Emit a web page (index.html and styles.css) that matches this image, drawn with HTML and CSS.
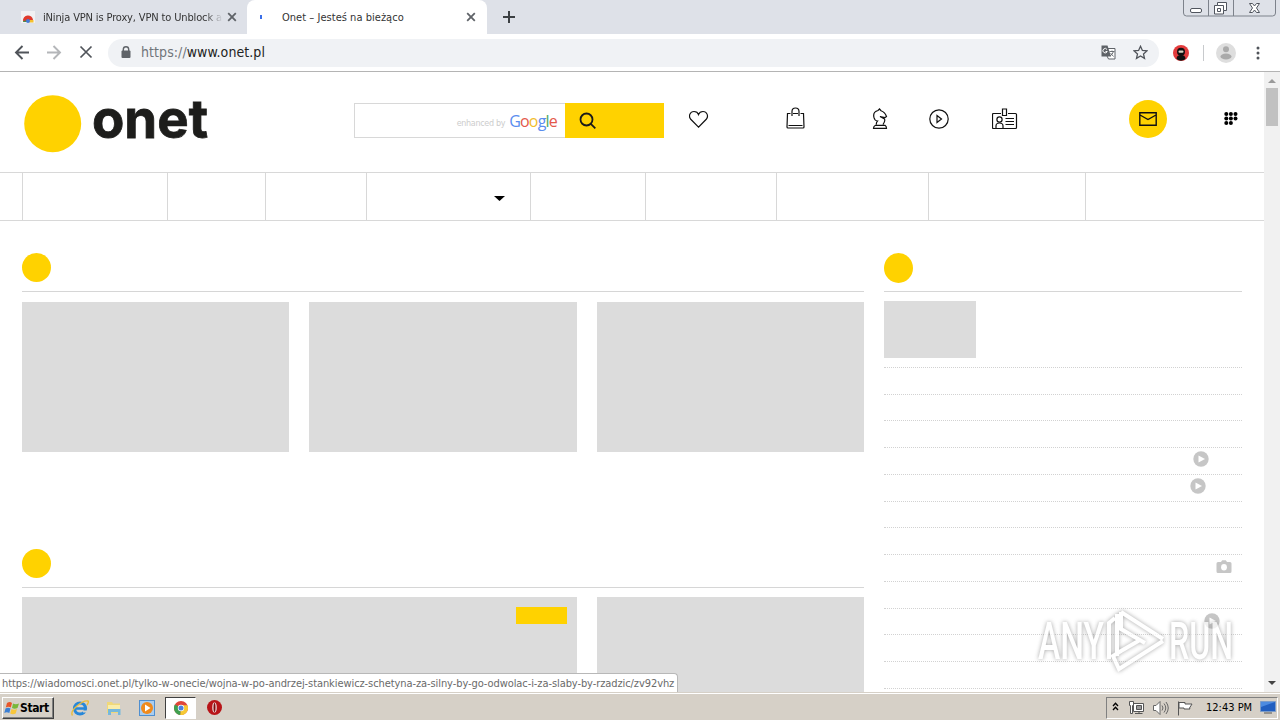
FILE: index.html
```html
<!DOCTYPE html>
<html lang="pl">
<head>
<meta charset="utf-8">
<title>Onet – Jesteś na bieżąco</title>
<link rel="stylesheet" href="styles.css">
</head>

<body>
<div class="screen">

	<!-- tabs -->
	<div class="tabs">
		<div class="tab">
			<svg class="favicon" width="16" height="16" viewBox="0 0 16 16">
				<path d="M1 2h14v12H1z" fill="#f1f1f3"/>
				<path d="M3 13a5 5 0 0 1 10 0z" fill="#4c8a4a"/>
				<path d="M3 12a5 5 0 0 1 10-1l-5 0z" fill="#e0392b"/>
				<path d="M9 11h4.500v2.500H9z" fill="#f5c02d"/>
				<circle cx="8" cy="12" r="2" fill="#4478d8"/>
			</svg>
			<span class="tabtitle fade">iNinja VPN is Proxy, VPN to Unblock a</span>
			<svg class="close" width="10" height="10" viewBox="0 0 10 10"><path d="M1.200 1.200l7.600 7.600M8.800 1.200l-7.600 7.600"/></svg>
		</div>
		<div class="tab active">
			<span class="spinner"></span>
			<span class="tabtitle">Onet – Jesteś na bieżąco</span>
			<svg class="close" width="10" height="10" viewBox="0 0 10 10"><path d="M1.200 1.200l7.600 7.600M8.800 1.200l-7.600 7.600"/></svg>
		</div>
		<svg class="newtab" width="12" height="12" viewBox="0 0 12 12"><path d="M6 0v12M0 6h12"/></svg>
		<svg class="winbtns" width="94" height="17" viewBox="0 0 94 17">
			<path d="M.5 0v13q0 3 3 3h86q3 0 3-3V0M25.500 0v16M50.500 0v16" fill="none" stroke="#7d828b"/>
			<rect x="7.500" y="8.500" width="11" height="4" rx="1.500" fill="#fff" stroke="#50555e"/>
			<path d="M34.500 2.500h9v8h-3v3.500h-9V5.500h3z" fill="#fff" stroke="#50555e"/>
			<path d="M34.500 5.500h6v5M34.500 8.500h3v3h-3z" fill="none" stroke="#50555e"/>
			<path d="M66.500 3.500h3l2 2.500 2-2.500h3L73.500 8l3 4.500h-3l-2-2.500-2 2.500h-3l3-4.500z" fill="#fff" stroke="#50555e"/>
		</svg>
	</div>

	<!-- toolbar -->
	<div class="toolbar">
		<svg class="navbtns" width="92" height="20" viewBox="0 0 92 20" fill="none" stroke-width="1.900">
			<path d="M15 9.500H2.500M8.500 3L2 9.500 8.500 16" stroke="#50545a"/>
			<path d="M33 9.500h12.500M39.500 3L46 9.500 39.500 16" stroke="#b4b6b9"/>
			<path d="M66.500 3.500l11 11M77.500 3.500l-11 11" stroke="#50545a" stroke-width="1.700"/>
		</svg>
		<div class="address">
			<svg width="10" height="13" viewBox="0 0 10 13">
				<path d="M2.300 5V3.400a2.700 2.700 0 0 1 5.400 0V5" fill="none" stroke="#5f6368" stroke-width="1.400"/>
				<rect x=".5" y="4.500" width="9" height="7.500" rx="1" fill="#5f6368"/>
			</svg>
			<span class="url"><i>https://</i>www.onet.pl</span>
			<svg class="translate" width="15" height="15" viewBox="0 0 15 15">
				<path d="M6 3.500h8v10.500H7.500L6 11" fill="#fff" stroke="#5f6368"/>
				<path d="M.5.500h6L10 11.500H.500z" fill="#5f6368"/>
				<path d="M6 4.500a2.200 2.200 0 1 0 .2 2H4.500" fill="none" stroke="#fff"/>
				<path d="M8.500 6.500h5M11 5.500v1M12.500 6.500q-1 3-3.500 4.500M9.500 8l3 3.500" fill="none" stroke="#5f6368" stroke-width=".9"/>
			</svg>
			<svg class="star" width="15" height="15" viewBox="0 0 15 15"><path d="M7.500 1.300l1.900 4.200 4.500.4-3.400 3 1 4.500-4-2.400-4 2.400 1-4.500-3.400-3 4.500-.4z" fill="none" stroke="#50545a" stroke-width="1.300"/></svg>
		</div>
		<svg class="ext" width="16" height="16" viewBox="0 0 16 16">
			<circle cx="8" cy="8" r="8" fill="#e33b3c"/>
			<circle cx="8" cy="6.800" r="4" fill="#111"/>
			<path d="M3.500 14q0-4 4.500-4t4.500 4Q8 17.500 3.500 14z" fill="#111"/>
			<rect x="5.500" y="5.500" width="5" height="2.200" rx="1" fill="#d9d4c4"/>
		</svg>
		<span class="split"></span>
		<svg class="avatar" width="20" height="20" viewBox="0 0 20 20">
			<circle cx="10" cy="10" r="10" fill="#dedede"/>
			<circle cx="10" cy="6.300" r="3" fill="#aaa"/>
			<ellipse cx="10" cy="13.500" rx="5.500" ry="3" fill="#aaa"/>
		</svg>
		<svg width="4" height="14" viewBox="0 0 4 14" fill="#50545a"><circle cx="2" cy="2" r="1.500"/><circle cx="2" cy="7" r="1.500"/><circle cx="2" cy="12" r="1.500"/></svg>
	</div>

	<div class="viewport">
		<div class="page">

			<!-- header -->
			<div class="header">
				<svg class="circle" width="58" height="58" viewBox="0 0 58 58"><circle cx="28.700" cy="28.700" r="28.500" fill="#ffd200"/></svg>
				<svg class="logo" width="122" height="80" viewBox="0 0 122 80">
					<text x="3" y="54" textLength="116" lengthAdjust="spacingAndGlyphs">onet</text>
				</svg>
				<div class="search">
					<div class="field">
						<span class="enhanced">enhanced by</span>
						<span class="google"><b class="b">G</b><b class="r">o</b><b class="y">o</b><b class="b">g</b><b class="g">l</b><b class="r">e</b></span>
					</div>
					<div class="go">
						<svg width="18" height="18" viewBox="0 0 18 18" fill="none" stroke="#1a1a1a" stroke-width="1.800"><circle cx="7.500" cy="7.500" r="6"/><path d="M11.800 11.800l4.500 4.500"/></svg>
					</div>
				</div>
				<div class="icons">
					<svg class="heart" width="20" height="18" viewBox="0 0 20 18"><path d="M9.500 17.200L1.500 9C-.7 6 1 1.500 5 1.500 7.500 1.500 9 3 9.500 4.500c.6-1.500 2-3 4.500-3 4 0 5.700 4.500 3.500 7.500z"/></svg>
					<svg class="bag" width="19" height="22" viewBox="0 0 19 22"><path d="M4.500 6.500h-3L1 20q0 1 1 1h15q1 0 1-1L17.500 6.500h-3M7 6.500h5M6 9V4.500a3.500 3.500 0 0 1 7 0V9M2.500 18.500h14"/></svg>
					<svg class="horse" width="16" height="22" viewBox="0 0 16 22"><path d="M2 9.500Q.5 4 6 2.500L7.500 1 9 2.700Q13 4 14.500 8.500L13 9.500 8 8.500l4.500 2.500q1 2-1.500 5.500M2 9.500q.5 3 3.500 3.500-1.500 1.500-1 3.500M3.500 17.300h9.500q1.500 1 1.500 3H1.500q0-2 2-3z"/></svg>
					<svg class="play" width="20" height="20" viewBox="0 0 20 20"><circle cx="10" cy="10" r="9.200"/><path d="M8 6.500v7L12.500 10z"/></svg>
					<svg class="card" width="26" height="22" viewBox="0 0 26 22"><path d="M9 5.500H1.500q-1 0-1 1v13q0 1 1 1h22q1 0 1-1v-13q0-1-1-1H16M10.500 1h4v6.500h-4zM13.500 10.500h8.500M13.500 13.500h8.500M13.500 16.500h8.500M4 20v-2q0-3 3.500-3t3.500 3v2"/><circle cx="7.500" cy="11.500" r="2.600"/></svg>
				</div>
				<div class="mail">
					<svg width="18" height="14" viewBox="0 0 18 14" fill="none" stroke="#111" stroke-width="1.400"><path d="M.8.800h16.400v12.400H.8zM1 3l8 4.500L17 3"/></svg>
				</div>
				<svg class="dots" width="14" height="13" viewBox="0 0 14 13" fill="#000">
					<circle cx="2.300" cy="2" r="2"/><circle cx="6.900" cy="2" r="2"/><circle cx="11.500" cy="2" r="2"/>
					<circle cx="2.300" cy="6.500" r="2"/><circle cx="6.900" cy="6.500" r="2"/><circle cx="11.500" cy="6.500" r="2"/>
					<circle cx="2.300" cy="11" r="2"/><circle cx="6.900" cy="11" r="2"/>
				</svg>
			</div>

			<!-- menu -->
			<div class="menu">
				<span></span><span></span><span></span>
				<span><svg width="11" height="5" viewBox="0 0 11 5"><path d="M0 0h11L5.500 5z"/></svg></span>
				<span></span><span></span><span></span><span></span><span></span>
			</div>

			<!-- content -->
			<div class="content">
				<div class="main">
					<div class="head"><span class="dot"></span></div>
					<div class="thumbs">
						<div></div>
						<div></div>
						<div></div>
					</div>
					<div class="head second"><span class="dot"></span></div>
					<div class="thumbs">
						<div class="wide"><span class="label"></span></div>
						<div></div>
					</div>
				</div>
				<div class="side">
					<div class="head"><span class="dot"></span></div>
					<div class="lead"><div class="pic"></div></div>
					<ul class="news">
						<li></li>
						<li></li>
						<li></li>
						<li><svg class="n1" width="16" height="16" viewBox="0 0 16 16"><circle cx="8" cy="8" r="7.700"/><path d="M5.500 4.500v7L12 8z" fill="#fff"/></svg></li>
						<li><svg class="n2" width="16" height="16" viewBox="0 0 16 16"><circle cx="8" cy="8" r="7.700"/><path d="M5.500 4.500v7L12 8z" fill="#fff"/></svg></li>
						<li></li>
						<li></li>
						<li><svg class="n3" width="16" height="14" viewBox="0 0 16 14"><path d="M5 2l1.200-1.700h3.600L11 2h3q1.500 0 1.500 1.500v8q0 1.500-1.500 1.500H2Q.5 13 .5 11.500v-8Q.5 2 2 2z"/><ellipse cx="8" cy="7.300" rx="2.900" ry="3.300" fill="#fff"/></svg></li>
						<li></li>
						<li><svg class="n4" width="16" height="16" viewBox="0 0 16 16"><circle cx="8" cy="8" r="7.700"/><path d="M5.500 4.500v7L12 8z" fill="#fff"/></svg></li>
						<li></li>
						<li></li>
					</ul>
				</div>
			</div>
		</div>

		<div class="scroll">
			<svg width="8" height="4" viewBox="0 0 8 4"><path d="M0 4l4-4 4 4z" fill="#9a9a9a"/></svg>
			<div class="thumb"></div>
			<svg class="down" width="8" height="4" viewBox="0 0 8 4"><path d="M0 0h8L4 4z" fill="#444"/></svg>
		</div>

		<svg class="watermark" width="204" height="70" viewBox="0 0 204 70">
			<text x="2" y="51" textLength="66" lengthAdjust="spacingAndGlyphs">ANY</text>
			<text x="133" y="51" textLength="64" lengthAdjust="spacingAndGlyphs">RUN</text>
			<path d="M73 51V15l6-5M81 48V6M85 4l42 27M85 4v17l24 14M85 43l19-11M85 43l-8 5 6 13 44-28"/>
		</svg>
		<div class="status">https://wiadomosci.onet.pl/tylko-w-onecie/wojna-w-po-andrzej-stankiewicz-schetyna-za-silny-by-go-odwolac-i-za-slaby-by-rzadzic/zv92vhz</div>
	</div>

	<!-- taskbar -->
	<div class="taskbar">
		<div class="start">
			<svg width="16" height="16" viewBox="0 0 16 16">
				<path d="M3 3q3-2 5 0L6.800 7.500q-2.500-1.500-5 0z" fill="#e8562a"/>
				<path d="M9 3.500q2.500 1.500 6 0L13.500 8q-3 1.500-5.500 0z" fill="#78b83a"/>
				<path d="M1.500 8.500q2.500-1.500 5 0L5.300 13q-2.500-1.500-5 0z" fill="#3b7fd4"/>
				<path d="M7.500 9q2.500 1.500 5.500 0l-1.300 4.500q-3 1.500-5.500 0z" fill="#f8c63a"/>
			</svg>
			<b>Start</b>
		</div>
		<svg class="ie" width="18" height="18" viewBox="0 0 18 18">
			<circle cx="9" cy="9.500" r="5.500" fill="none" stroke="#2687d9" stroke-width="3.200"/>
			<path d="M5 9.500h9.500" stroke="#2687d9" stroke-width="2.500"/>
			<path d="M12 11.500h5v2h-5z" fill="#d4d0c8"/>
			<path d="M1.500 16.500Q-1 13 6 7T17 2q1 1-1 4" fill="none" stroke="#e9bc3c" stroke-width="1.400"/>
		</svg>
		<svg class="explorer" width="16" height="16" viewBox="0 0 16 16">
			<path d="M1 2h5l1 1.500h7V13H1z" fill="#f0d878"/>
			<path d="M2 5h12v6H2z" fill="#f9edaa"/>
			<path d="M2 9h12.500v6H12v-3H5v3H2z" fill="#76b8dc"/>
		</svg>
		<svg class="wmp" width="16" height="16" viewBox="0 0 16 16">
			<rect x=".5" y=".5" width="15" height="15" fill="#a9cdf0" stroke="#4f8fd0"/>
			<circle cx="8" cy="8" r="6" fill="#f08a1c"/>
			<path d="M6 4.500v7L11.500 8z" fill="#fff"/>
		</svg>
		<div class="running">
			<svg width="14" height="14" viewBox="0 0 14 14">
				<circle cx="7" cy="7" r="7" fill="#e0463a"/>
				<path d="M7 7L.9 3.500A7 7 0 0 0 6.500 14z" fill="#3fa050"/>
				<path d="M7 7h0l-.7 7A7 7 0 0 0 13.400 4.200H7z" fill="#f6c934"/>
				<circle cx="7" cy="7" r="3.200" fill="#fff"/><circle cx="7" cy="7" r="2.500" fill="#4b80e0"/>
			</svg>
		</div>
		<svg class="opera" width="15" height="15" viewBox="0 0 15 15"><circle cx="7.500" cy="7.500" r="7.500" fill="#b81418"/><ellipse cx="7.500" cy="7.500" rx="2.200" ry="5" fill="#f2e4e4"/><ellipse cx="7.500" cy="7.500" rx="1" ry="4.500" fill="#7d0b0d"/></svg>
		<div class="tray">
			<svg class="chev" width="7" height="9" viewBox="0 0 7 9" fill="none" stroke="#000" stroke-width="1.300"><path d="M1 4l2.500-2.800L6 4M1 8l2.500-2.800L6 8"/></svg>
			<svg class="net" width="16" height="16" viewBox="0 0 16 16" fill="#fff" stroke="#555"><path d="M4.500 3.500h10v8h-10zM6 13.500h7.500M10 11.500v2"/><path d="M7.500 5.500h5v4h-5z" fill="#999"/><path d="M.5 1.500h4v4h-1v8h-2v-8h-1z"/></svg>
			<svg class="vol" width="16" height="16" viewBox="0 0 16 16" fill="none" stroke="#666"><path d="M.5 5.500H3l4-4v13l-4-4H.5z" fill="#fff"/><path d="M9 5.500q2 2.500 0 5M11 3.500q3.500 4.500 0 9M13 2q4.500 6 0 12"/></svg>
			<svg class="flag" width="16" height="16" viewBox="0 0 16 16" fill="#fff" stroke="#555"><path d="M1.500 1.500v14M2 2.500h6v1.500h7l-2.500 4 .5 1H7V8H2z"/></svg>
			<span class="clock">12:43 PM</span>
			<svg class="desk" width="16" height="13" viewBox="0 0 16 13"><path d="M.5.500h15v10H.5z" fill="#225fc0" stroke="#7c9cc8"/><path d="M1 1h14L1 6z" fill="#4d8be0"/><path d="M4 12h8" stroke="#555"/></svg>
		</div>
	</div>

</div>
</body>
</html>
```
FILE: styles.css
```css
* {
	box-sizing: border-box;
}

body {
	margin: 0;
	font: 11px "DejaVu Sans Condensed", "DejaVu Sans", sans-serif;
	font-stretch: condensed;
	color: #333;
}

svg, span {
	flex: none;
}

.screen {
	width: 1280px;
	height: 720px;
	display: flex;
	flex-direction: column;
	overflow: hidden;
	background: #fff;
}

/* tabs */
.tabs {
	height: 34px;
	display: flex;
	background: #dee1e8;
}

.tab {
	width: 247px;
	display: flex;
	align-items: center;
	padding: 0 10px 0 20px;
}

.tab.active {
	width: 240px;
	padding: 0 11px 0 13px;
	background: #fff;
	border-radius: 8px 8px 0 0;
}

.tabtitle {
	flex: 1;
	margin-left: 7px;
	white-space: nowrap;
	letter-spacing: -0.14px;
}

.active .tabtitle {
	margin-left: 20px;
	letter-spacing: 0.03px;
}

.fade {
	margin-right: 4px;
	-webkit-mask-image: linear-gradient(90deg, #000 90%, transparent);
}

.close {
	fill: none;
	stroke: #5f6368;
	stroke-width: 1.8;
}

.spinner {
	width: 2px;
	height: 4px;
	background: #3b6fe8;
}

.newtab {
	margin: 11px 0 0 16px;
	stroke: #3c4043;
	stroke-width: 2;
}

.winbtns {
	margin: 0 3px 0 auto;
}

/* toolbar */
.toolbar {
	height: 38px;
	display: flex;
	align-items: center;
	padding: 0 20px 0 14px;
	border-bottom: 1px solid #b4b4b4;
}

.address {
	width: 1051px;
	height: 28px;
	margin: 0 14px 0 2px;
	padding: 0 11px 0 13px;
	display: flex;
	align-items: center;
	background: #f0f2f5;
	border-radius: 14px;
}

.url {
	margin: -2px 0 0 10px;
	font-size: 14px;
	letter-spacing: 0.07px;
	color: #222;
}

.url i {
	font-style: normal;
	color: #70757a;
}

.translate {
	margin: 0 17px 0 auto;
}

.split {
	width: 1px;
	height: 16px;
	margin: 0 12px 0 14px;
	background: #c8cacd;
}

.avatar {
	margin-right: 20px;
}

/* page */
.viewport {
	height: 620px;
	display: flex;
	position: relative;
}

.page {
	width: 1264px;
	overflow: hidden;
}

.header {
	height: 100px;
	display: flex;
	align-items: flex-start;
	padding-left: 24px;
}

.circle {
	margin-top: 23px;
}

.logo {
	margin: 12px 0 0 7px;
}

.logo text {
	font: 700 54px Inter, sans-serif;
	fill: #1d1d1b;
	stroke: #1d1d1b;
	stroke-width: 0.8;
}

.search {
	width: 310px;
	height: 35px;
	margin: 31px 0 0 143px;
	display: flex;
}

.field {
	flex: 1;
	display: flex;
	justify-content: flex-end;
	align-items: center;
	padding-right: 8px;
	border: 1px solid #d8d8d8;
	border-right: 0;
}

.enhanced {
	margin: 5px 4px 0 0;
	font: 8px "DejaVu Sans", sans-serif;
	letter-spacing: -0.3px;
	color: #ccc;
}

.google {
	font: 16px "Open Sans", sans-serif;
	letter-spacing: -0.8px;
}

.google b {
	font-weight: 500;
}

.b { color: #5b8def; }
.r { color: #e4584b; }
.y { color: #f2bd2e; }
.g { color: #4ea862; }

.go {
	width: 99px;
	padding: 9px 0 0 14px;
	background: #ffd200;
}

.icons {
	width: 440px;
	height: 34px;
	display: flex;
	align-items: center;
	margin: 30px 0 0 25px;
	fill: none;
	stroke: #111;
	stroke-width: 1.2;
}

.bag { margin: -2px 0 0 77px; }
.horse { margin-left: 67px; }
.play { margin-left: 41px; }
.card { margin-left: 43px; }

.mail {
	width: 38px;
	height: 38px;
	margin-top: 28px;
	display: flex;
	align-items: center;
	justify-content: center;
	border-radius: 50%;
	background: #ffd200;
}

.dots {
	margin: 40px 0 0 57px;
}

.menu {
	height: 49px;
	padding-left: 22px;
	display: grid;
	grid-template-columns: 145px 98px 101px 164px 115px 131px 152px 157px 1fr;
	border-top: 1px solid #d8d8d8;
	border-bottom: 1px solid #d8d8d8;
}

.menu span {
	display: flex;
	align-items: center;
	justify-content: flex-end;
	padding: 3px 25px 0 0;
	border-left: 1px solid #d8d8d8;
}

.content {
	display: flex;
	gap: 20px;
	padding: 32px 0 0 22px;
}

.main {
	width: 842px;
}

.head {
	height: 39px;
	border-bottom: 1px solid #d6d6d6;
}

.dot {
	display: block;
	width: 29px;
	height: 29px;
	border-radius: 50%;
	background: #ffd200;
}

.second {
	margin-top: 97px;
	height: 39px;
}

.thumbs {
	display: grid;
	grid-template-columns: 267px 268px 267px;
	gap: 20px;
	padding-top: 10px;
}

.second + .thumbs {
	padding-top: 9px;
}

.thumbs > div {
	height: 150px;
	background: #dcdcdc;
}

.thumbs > .wide {
	grid-column: span 2;
	display: flex;
	justify-content: flex-end;
	padding: 10px 10px 0 0;
}

.label {
	width: 51px;
	height: 17px;
	background: #ffd200;
}

.side {
	width: 358px;
}

.side .dot {
	height: 30px;
}

.lead {
	height: 75.76px;
	padding-top: 9px;
	border-bottom: 1px dotted #d2d2d2;
}

.pic {
	width: 92px;
	height: 57px;
	background: #dcdcdc;
}

.news {
	margin: 0;
	padding: 0;
	list-style: none;
	fill: #c6c6c6;
}

.news li {
	height: 26.78px;
	display: flex;
	align-items: center;
	justify-content: flex-end;
	border-bottom: 1px dotted #d2d2d2;
}

.n1 { margin: -3px 33px 0 0; }
.n2 { margin: -3px 36px 0 0; }
.n3 { margin: -1px 10px 0 0; }
.n4 { margin: -2px 22px 0 0; }

/* scrollbar */
.scroll {
	width: 16px;
	padding: 7px 2px 7px;
	display: flex;
	flex-direction: column;
	align-items: center;
	background: #f1f1f1;
}

.thumb {
	width: 12px;
	height: 38px;
	margin-top: 5px;
	background: #c1c1c1;
}

.down {
	margin-top: auto;
}

.watermark {
	position: absolute;
	left: 1036px;
	top: 536px;
	overflow: visible;
	filter: drop-shadow(0 0 2px #888);
	opacity: 0.75;
}

.watermark text {
	font: 500 51px Roboto, sans-serif;
	fill: #fff;
}

.watermark path {
	fill: none;
	stroke: #fff;
	stroke-width: 4;
}

.status {
	position: absolute;
	left: 0;
	bottom: 0;
	width: 678px;
	height: 19px;
	padding-left: 2px;
	line-height: 19px;
	white-space: nowrap;
	letter-spacing: -0.083px;
	background: #fff;
	border: 1px solid #b8b8b8;
	border-width: 1px 1px 0 0;
	border-radius: 0 4px 0 0;
	color: #6a6a6a;
}

/* taskbar */
.taskbar {
	height: 28px;
	display: flex;
	align-items: center;
	padding: 3px 2px 0 2px;
	background: #d6d0c7;
	box-shadow: inset 0 1px #d6d0c7, inset 0 2px #fff;
}

.start {
	width: 52px;
	height: 22px;
	display: flex;
	align-items: center;
	padding-left: 1px;
	border: 1px solid;
	border-color: #fff #404040 #404040 #fff;
	box-shadow: inset -1px -1px #808080;
	color: #000;
	font-size: 12px;
}

.start b {
	letter-spacing: -0.4px;
}

.ie { margin-left: 17px; }
.explorer { margin-left: 17px; }
.wmp { margin-left: 17px; }

.running {
	width: 31px;
	height: 22px;
	margin: 0 11px 0 10px;
	display: flex;
	align-items: center;
	justify-content: center;
	background: #fff;
	border: 1px solid;
	border-color: #404040 #fff #fff #404040;
}

.tray {
	width: 172px;
	height: 22px;
	margin-left: auto;
	display: flex;
	align-items: center;
	padding-left: 5px;
	border: 1px solid;
	border-color: #808080 #fff #fff #808080;
}

.chev { margin: -3px 10px 0 0; }
.net { margin-right: 8px; }
.vol { margin-right: 8px; }

.clock {
	width: 46px;
	margin: 0 8px 0 13px;
	white-space: nowrap;
	color: #000;
}
```
